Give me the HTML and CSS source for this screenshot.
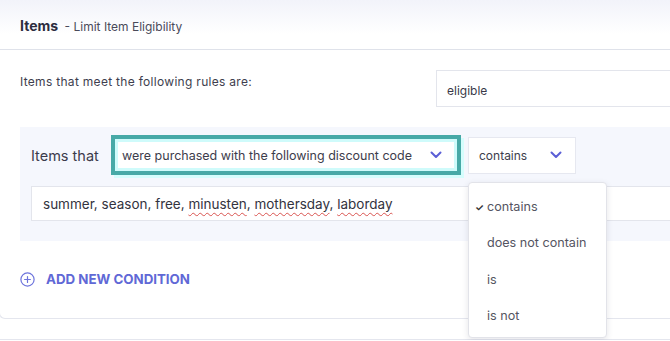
FILE: index.html
```html
<!DOCTYPE html>
<html lang="en">
<head>
    <meta charset="UTF-8">
    <meta name="viewport" content="width=device-width, initial-scale=1.0">
    <title>Items - Limit Item Eligibility</title>
    <link rel="stylesheet" href="styles.css">
</head>
<body>
    <div class="card">
        <div class="card-head">
            <span class="title">Items</span>
            <span class="subtitle">- Limit Item Eligibility</span>
        </div>

        <div class="card-body">
            <div class="rule-row">
                <p class="rule-text">Items that meet the following rules are:</p>
                <div class="field eligible">eligible</div>
            </div>

            <div class="condition">
                <div class="cond-row">
                    <span class="cond-label">Items that</span>
                    <div class="select select-focus">
                        <span>were purchased with the following discount code</span>
                        <svg class="chevron" width="12" height="8" viewBox="0 0 12 8"><path d="M1.5 1.5l4.5 4.5 4.5-4.5" fill="none" stroke="#5b5fd6" stroke-width="2" stroke-linecap="round" stroke-linejoin="round"/></svg>
                    </div>
                    <div class="op-wrap">
                        <div class="select select-op">
                            <span>contains</span>
                            <svg class="chevron" width="12" height="8" viewBox="0 0 12 8"><path d="M1.5 1.5l4.5 4.5 4.5-4.5" fill="none" stroke="#5b5fd6" stroke-width="2" stroke-linecap="round" stroke-linejoin="round"/></svg>
                        </div>
                        <ul class="menu">
                            <li class="menu-item selected">contains</li>
                            <li class="menu-item">does not contain</li>
                            <li class="menu-item">is</li>
                            <li class="menu-item">is not</li>
                        </ul>
                    </div>
                </div>
                <div class="field codes">
                    <span>summer, season, free, <span class="typo">minusten</span>, <span class="typo">mothersday</span>, <span class="typo">laborday</span></span>
                </div>
            </div>

            <div class="add-condition">
                <svg width="15" height="15" viewBox="0 0 15 15"><circle cx="7.5" cy="7.5" r="6.6" fill="none" stroke="#6d74dc" stroke-width="1.2"/><path d="M7.5 4.6v5.8M4.6 7.5h5.8" stroke="#6d74dc" stroke-width="1.2" stroke-linecap="round"/></svg>
                <span>ADD NEW CONDITION</span>
            </div>
        </div>
    </div>
    <div class="next-card"></div>
</body>
</html>
```

FILE: styles.css
```css
body {
    margin: 0;
    font-family: Inter, "Open Sans", sans-serif;
    color: #3b3b4b;
    background: #ffffff;
    overflow: hidden;
}

.card {
    border: 1px solid #e4e6ee;
    border-top: none;
    border-right: none;
    border-radius: 0 0 0 6px;
    margin-left: -1px;
    height: 319px;
    box-sizing: border-box;
}

.card-head {
    height: 50px;
    box-sizing: border-box;
    padding: 15px 20px 0;
    border-bottom: 1px solid #dfe2ea;
    background: linear-gradient(#f2f3fa, #ffffff 70%);
}

.title {
    font-size: 14px;
    font-weight: 700;
    color: #2c2c3e;
}

.subtitle {
    font-size: 12px;
    color: #4a4a5a;
    margin-left: 2px;
}

.card-body {
    padding: 20px 0 0 20px;
}

.rule-row {
    display: flex;
    justify-content: space-between;
    align-items: flex-start;
}

.rule-text {
    margin: 4px 0 0;
    font-size: 12px;
    letter-spacing: 0.3px;
    color: #3e3e4e;
}

.field {
    background: #fff;
    border: 1px solid #e3e5ec;
    box-sizing: border-box;
    display: flex;
    align-items: center;
    color: #3a3a48;
}

.eligible {
    width: 260px;
    height: 37px;
    margin-right: -26px;
    padding: 3px 0 0 10px;
    font-size: 12px;
}

.condition {
    margin-top: 20px;
    margin-right: -20px;
    background: #f5f7fd;
    padding: 8px 0 20px 11px;
}

.cond-row {
    display: flex;
    align-items: center;
}

.cond-label {
    font-size: 14.5px;
    color: #3b3b4b;
    width: 80px;
}

.select {
    background: #fff;
    box-sizing: border-box;
    display: flex;
    align-items: center;
    justify-content: space-between;
    font-size: 12.5px;
    color: #3d3d4c;
}

.select-focus {
    width: 350px;
    height: 40px;
    border: 4px solid #47a9a7;
    box-shadow: inset 0 0 0 3px #cffbfb, 3px 3px 0 #d6fdfd;
    padding: 0 15px 0 7px;
}

.op-wrap {
    position: relative;
    margin-left: 7px;
}

.select-op {
    width: 108px;
    height: 37px;
    border: 1px solid #e6e8f0;
    padding: 0 13px 0 10px;
    font-size: 12px;
}

.menu {
    position: absolute;
    top: 45px;
    left: 0;
    width: 139px;
    margin: 0;
    padding: 6px 0 2px;
    list-style: none;
    background: #fff;
    border: 1px solid #e2e3e9;
    border-radius: 4px;
    box-sizing: border-box;
    box-shadow: 0 2px 6px rgba(40, 40, 70, 0.12);
    z-index: 2;
}

.menu-item {
    position: relative;
    height: 36.5px;
    line-height: 36.5px;
    padding-left: 18px;
    font-size: 12.6px;
    color: #555562;
}

.selected::before {
    content: "\2713";
    position: absolute;
    left: 6px;
    font-size: 10px;
    font-weight: 700;
    color: #333;
}

.codes {
    margin-top: 11px;
    height: 35px;
    padding-left: 11px;
    font-size: 13.5px;
    color: #333340;
}

.typo {
    text-decoration: underline wavy #d9534f;
    text-decoration-thickness: 1px;
    text-underline-offset: 3px;
}

.add-condition {
    margin-top: 30px;
    display: flex;
    align-items: center;
    gap: 11px;
    font-size: 13.3px;
    font-weight: 700;
    color: #6068d6;
}

.next-card {
    margin-top: 20px;
    border-top: 1px solid #e4e6ee;
}
```
